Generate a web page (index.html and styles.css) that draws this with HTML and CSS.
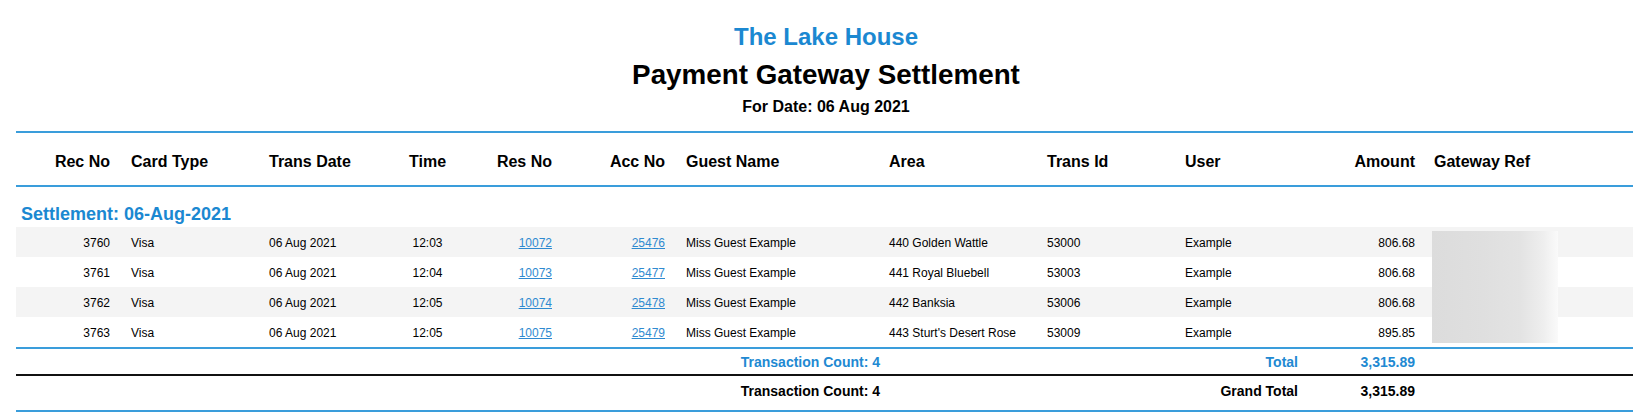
FILE: index.html
```html
<!DOCTYPE html>
<html>
<head>
<meta charset="utf-8">
<title>Payment Gateway Settlement</title>
<link rel="stylesheet" href="styles.css">
</head>
<body>
<div class="report">
  <header class="report-head">
    <h2 class="property">The Lake House</h2>
    <h1 class="title">Payment Gateway Settlement</h1>
    <p class="for-date">For Date: 06 Aug 2021</p>
  </header>
  <table class="grid">
    <colgroup>
      <col class="w-rec"><col class="w-card"><col class="w-date"><col class="w-time"><col class="w-res"><col class="w-acc"><col class="w-guest"><col class="w-area"><col class="w-tid"><col class="w-user"><col class="w-amt"><col class="w-ref">
    </colgroup>
    <thead>
      <tr>
        <th class="c-rec">Rec No</th>
        <th class="c-card">Card Type</th>
        <th class="c-date">Trans Date</th>
        <th class="c-time">Time</th>
        <th class="c-res">Res No</th>
        <th class="c-acc">Acc No</th>
        <th class="c-guest">Guest Name</th>
        <th class="c-area">Area</th>
        <th class="c-tid">Trans Id</th>
        <th class="c-user">User</th>
        <th class="c-amt">Amount</th>
        <th class="c-ref">Gateway Ref</th>
      </tr>
    </thead>
    <tbody>
      <tr class="group-row"><td colspan="12">Settlement: 06-Aug-2021</td></tr>
      <tr class="row alt">
        <td class="c-rec">3760</td><td class="c-card">Visa</td><td class="c-date">06 Aug 2021</td><td class="c-time">12:03</td>
        <td class="c-res"><a href="#">10072</a></td><td class="c-acc"><a href="#">25476</a></td><td class="c-guest">Miss Guest Example</td>
        <td class="c-area">440 Golden Wattle</td><td class="c-tid">53000</td><td class="c-user">Example</td><td class="c-amt">806.68</td>
        <td class="c-ref"><div class="redact first"></div></td>
      </tr>
      <tr class="row">
        <td class="c-rec">3761</td><td class="c-card">Visa</td><td class="c-date">06 Aug 2021</td><td class="c-time">12:04</td>
        <td class="c-res"><a href="#">10073</a></td><td class="c-acc"><a href="#">25477</a></td><td class="c-guest">Miss Guest Example</td>
        <td class="c-area">441 Royal Bluebell</td><td class="c-tid">53003</td><td class="c-user">Example</td><td class="c-amt">806.68</td>
        <td class="c-ref"><div class="redact"></div></td>
      </tr>
      <tr class="row alt">
        <td class="c-rec">3762</td><td class="c-card">Visa</td><td class="c-date">06 Aug 2021</td><td class="c-time">12:05</td>
        <td class="c-res"><a href="#">10074</a></td><td class="c-acc"><a href="#">25478</a></td><td class="c-guest">Miss Guest Example</td>
        <td class="c-area">442 Banksia</td><td class="c-tid">53006</td><td class="c-user">Example</td><td class="c-amt">806.68</td>
        <td class="c-ref"><div class="redact"></div></td>
      </tr>
      <tr class="row">
        <td class="c-rec">3763</td><td class="c-card">Visa</td><td class="c-date">06 Aug 2021</td><td class="c-time">12:05</td>
        <td class="c-res"><a href="#">10075</a></td><td class="c-acc"><a href="#">25479</a></td><td class="c-guest">Miss Guest Example</td>
        <td class="c-area">443 Sturt's Desert Rose</td><td class="c-tid">53009</td><td class="c-user">Example</td><td class="c-amt">895.85</td>
        <td class="c-ref"><div class="redact last"></div></td>
      </tr>
    </tbody>
    <tfoot>
      <tr class="subtotal">
        <td colspan="7" class="s-count">Transaction Count: 4</td>
        <td colspan="2"></td>
        <td class="s-label">Total</td>
        <td class="s-amt">3,315.89</td>
        <td></td>
      </tr>
      <tr class="grandtotal">
        <td colspan="7" class="s-count">Transaction Count: 4</td>
        <td colspan="2"></td>
        <td class="s-label">Grand Total</td>
        <td class="s-amt">3,315.89</td>
        <td></td>
      </tr>
    </tfoot>
  </table>
</div>
</body>
</html>
```

FILE: styles.css
```css
html, body {
  margin: 0;
  padding: 0;
  background: #ffffff;
}

body {
  font-family: "Liberation Sans", Arial, sans-serif;
  color: #000000;
}

.report {
  padding: 23px 0 0 16px;
}

.report-head {
  width: 1620px;
  text-align: center;
}

.property {
  margin: 0;
  font-size: 24px;
  line-height: 28px;
  font-weight: bold;
  color: #1b88d1;
}

.title {
  margin: 8px 0 0;
  font-size: 27.8px;
  line-height: 32px;
  font-weight: bold;
}

.for-date {
  margin: 7px 0 0;
  font-size: 16px;
  line-height: 18px;
  font-weight: bold;
}

.grid {
  margin-top: 15px;
  width: 1617px;
  table-layout: fixed;
  border-collapse: separate;
  border-spacing: 0;
}

.w-rec { width: 101px; }
.w-card { width: 146px; }
.w-date { width: 125px; }
.w-time { width: 79px; }
.w-res { width: 90px; }
.w-acc { width: 112px; }
.w-guest { width: 215px; }
.w-area { width: 158px; }
.w-tid { width: 137px; }
.w-user { width: 123px; }
.w-amt { width: 124px; }
.w-ref { width: 207px; }

.grid th {
  font-size: 16px;
  line-height: 18px;
  font-weight: bold;
  padding-top: 20px;
  padding-bottom: 14px;
  border-top: 2px solid #3a9ddb;
  border-bottom: 2px solid #3a9ddb;
  white-space: nowrap;
}

.grid td {
  white-space: nowrap;
  padding: 0;
}

.c-rec { text-align: right; padding-right: 7px !important; }
.c-card { text-align: left; padding-left: 14px !important; }
.c-date { text-align: left; padding-left: 6px !important; }
.c-time { text-align: center; }
.c-res { text-align: right; padding-right: 5px !important; }
.c-acc { text-align: right; padding-right: 4px !important; }
.c-guest { text-align: left; padding-left: 17px !important; }
.c-area { text-align: left; padding-left: 5px !important; }
.c-tid { text-align: left; padding-left: 5px !important; }
.c-user { text-align: left; padding-left: 6px !important; }
.c-amt { text-align: right; padding-right: 11px !important; }
.c-ref { text-align: left; padding-left: 8px !important; }

.group-row td {
  padding: 17px 5px 2px !important;
  font-size: 18px;
  line-height: 21px;
  font-weight: bold;
  color: #1b88d1;
}

.row td {
  font-size: 12px;
  line-height: 14px;
  padding-top: 9px;
  padding-bottom: 7px;
}

.row.alt {
  background: #f4f4f4;
}

.row a {
  color: #2f8ad0;
  text-decoration: underline;
}

.row td.c-ref {
  padding: 0 0 0 6px !important;
  vertical-align: top;
}

.redact {
  width: 126px;
  height: 30px;
  background: linear-gradient(to right, #dcdcdc 0%, #dfdfdf 40%, #e3e3e3 70%, #eeeeee 88%, #fafafa 100%);
}

.redact.first {
  margin-top: 4px;
  height: 26px;
}

.redact.last {
  height: 26px;
}

.subtotal td,
.grandtotal td {
  font-size: 14px;
  line-height: 16px;
  font-weight: bold;
  text-align: right;
}

.subtotal td {
  color: #2189d2;
  padding-top: 5px;
  padding-bottom: 4px;
  border-top: 2px solid #3a9ddb;
  border-bottom: 2px solid #111111;
}

.grandtotal td {
  padding-top: 7px;
  padding-bottom: 11px;
  border-bottom: 2px solid #3a9ddb;
}

.s-count { padding-right: 4px !important; }
.s-label { padding-right: 4px !important; }
.s-amt { padding-right: 11px !important; }
```
